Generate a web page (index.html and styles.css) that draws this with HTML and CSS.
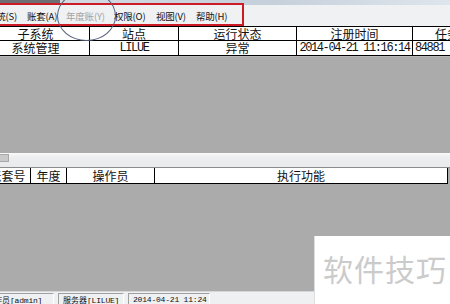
FILE: index.html
```html
<!doctype html>
<html>
<head>
  <title>系统管理</title>
  <link rel="stylesheet" href="styles.css">
</head>
<body>
  <div class="window">
    <div class="titlebar"><span class="title-dark"></span></div>

    <div class="menubar">
      <span class="menu w40">系统(S)</span>
      <span class="menu w39">账套(A)</span>
      <span class="menu w48 off">年度账(Y)</span>
      <span class="menu w42">权限(O)</span>
      <span class="menu w40">视图(V)</span>
      <span class="menu">帮助(H)</span>
    </div>

    <div class="grid top-grid">
      <div class="row head">
        <div class="cell c1">子系统</div>
        <div class="cell c2">站点</div>
        <div class="cell c3">运行状态</div>
        <div class="cell c4">注册时间</div>
        <div class="cell c5">任务号</div>
      </div>
      <div class="row data">
        <div class="cell c1">系统管理</div>
        <div class="cell c2 latin">LILUE</div>
        <div class="cell c3">异常</div>
        <div class="cell c4 latin">2014-04-21 11:16:14</div>
        <div class="cell c5 latin left">84881</div>
      </div>
    </div>

    <div class="pane upper"></div>

    <div class="splitbar"><span class="grip"></span></div>

    <div class="grid low-grid">
      <div class="row head tall">
        <div class="cell d1">账套号</div>
        <div class="cell d2">年度</div>
        <div class="cell d3">操作员</div>
        <div class="cell d4">执行功能</div>
      </div>
    </div>

    <div class="pane lower"></div>

    <div class="statusbar">
      <span class="panel p1">操作员<span class="latin">[admin]</span></span>
      <span class="panel p2">服务器<span class="latin">[LILUE]</span></span>
      <span class="panel p3 latin">2014-04-21 11:24</span>
    </div>

    <!-- annotations drawn over the screenshot -->
    <div class="redbox"></div>
    <div class="ring"></div>
    <div class="watermark">软件技巧</div>
  </div>
</body>
</html>
```

FILE: styles.css
```css
body{
    margin: 0;
    overflow: hidden;
    font-family: "Noto Sans CJK SC", sans-serif;
    color: #111;
}
.window{
    position: relative;
    width: 450px;
    height: 304px;
    display: flex;
    flex-direction: column;
    overflow: hidden;
    background: #ababab;
}
.titlebar{
    height: 5px;
    flex: none;
    background: linear-gradient(to right, #d6dbe2, #c5d0dc 60%, #dfe5ec);
}
.title-dark{
    display: block;
    width: 60px;
    height: 4px;
    background: #6d6f73;
}

.menubar{
    height: 21px;
    flex: none;
    display: flex;
    align-items: center;
    margin-left: -13px;
    background: #f0f1f3;
    font-size: 9.5px;
    letter-spacing: -0.2px;
}
.menu{ flex: none; white-space: nowrap; }
.w40{ width: 40px; }
.w39{ width: 39px; }
.w48{ width: 48px; }
.w42{ width: 42px; }
.off{ color: #a3a3a3; }

.grid{
    flex: none;
    background: #fff;
    font-size: 12px;
}
.top-grid{
    margin-left: -18px;
    border-top: 1px solid #000;
}
.row{
    display: flex;
    height: 13px;
    border-bottom: 1px solid #000;
}
.cell{
    flex: none;
    border-right: 1px solid #000;
    text-align: center;
    line-height: 13px;
    white-space: nowrap;
}
.row.data{ height: 14px; }
.row.data .cell{ line-height: 14px; }
.row.tall{ height: 15px; }
.row.tall .cell{ line-height: 15px; }
.latin{
    font-family: "Liberation Mono", monospace;
    letter-spacing: -1.4px;
}
.left{ text-align: left; padding-left: 2px; }

.c1{ width: 107px; }
.c2{ width: 88px; }
.c3{ width: 117px; }
.c4{ width: 115px; }
.c5{ width: 80px; }

.pane{ flex: none; background: #ababab; }
.upper{ height: 96px; border-top: 1px solid #b9b9b9; }
.lower{ flex: 1; }

.splitbar{
    height: 14px;
    flex: none;
    background: linear-gradient(#fafafa, #eceef0 30%, #e8eaec);
    border-bottom: 1px solid #8c8c8c;
}
.grip{
    display: block;
    width: 8px;
    height: 6px;
    margin-top: 1px;
    background: #c9c9c9;
    border: 1px solid #a8a8a8;
    border-left: none;
}

.low-grid{
    margin-left: -15px;
    width: 463px;
}
.d1{ width: 45px; }
.d2{ width: 35px; }
.d3{ width: 87px; }
.d4{ width: 292px; }

.statusbar{
    height: 11px;
    flex: none;
    display: flex;
    gap: 4px;
    margin-left: -20px;
    padding-top: 1px;
    background: #eff0f1;
    border-top: 1px solid #d6d6d6;
    font-size: 8px;
    line-height: 11px;
}
.statusbar .latin{ letter-spacing: -0.2px; }
.panel{
    display: block;
    padding-left: 4px;
    border-left: 1px solid #a0a0a0;
    border-top: 1px solid #a0a0a0;
    border-right: 1px solid #fff;
    white-space: nowrap;
    overflow: hidden;
}
.p1{ width: 67px; padding-left: 5px; }
.p2{ width: 60px; }
.p3{ width: 76px; }

.redbox{
    position: absolute;
    left: -3px;
    top: 3px;
    width: 243px;
    height: 19px;
    border: 2px solid #cc1a26;
}
.ring{
    position: absolute;
    left: 57px;
    top: -9px;
    width: 57px;
    height: 48px;
    border: 1px solid #56617a;
    border-radius: 50%;
}
.watermark{
    position: absolute;
    left: 314px;
    top: 236px;
    width: 128px;
    height: 51px;
    padding: 17px 0 0 8px;
    background: #fff;
    border-left: 1px solid #dedede;
    color: #cbcbcb;
    font-size: 30px;
    line-height: 30px;
    letter-spacing: 1px;
    white-space: nowrap;
}
```
